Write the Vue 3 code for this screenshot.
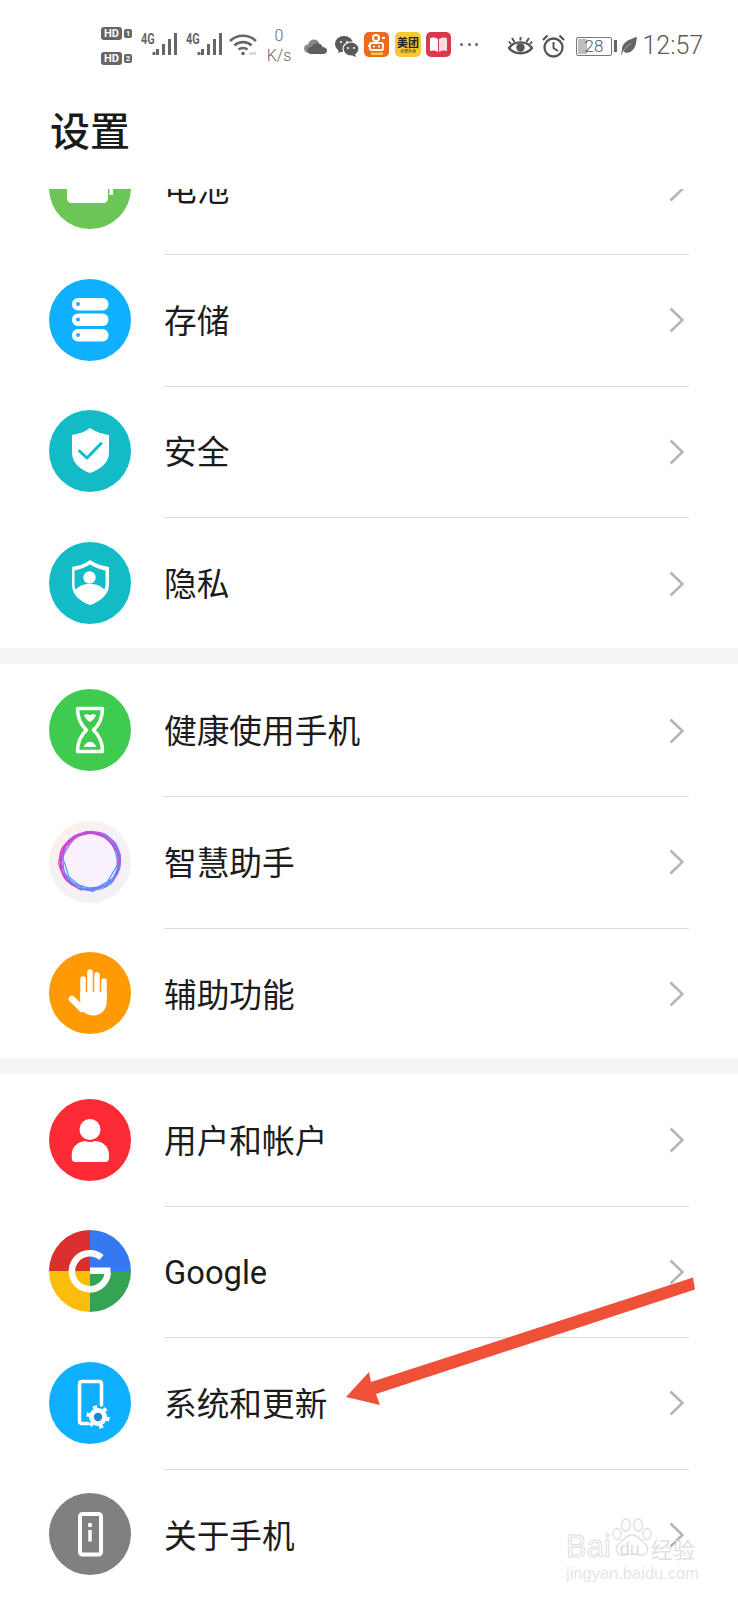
<script setup>
const sections = [
  [
    { icon: 'battery', label: '电池' },
    { icon: 'storage', label: '存储' },
    { icon: 'security', label: '安全' },
    { icon: 'privacy', label: '隐私' }
  ],
  [
    { icon: 'health', label: '健康使用手机' },
    { icon: 'assistant', label: '智慧助手' },
    { icon: 'access', label: '辅助功能' }
  ],
  [
    { icon: 'users', label: '用户和帐户' },
    { icon: 'google', label: 'Google' },
    { icon: 'system', label: '系统和更新' },
    { icon: 'about', label: '关于手机' }
  ]
]
const shield = 'M41 18C47 22 54 24 60 25V43C60 53 50 60 41 63C32 60 23 53 23 43V25C29 24 36 22 41 18Z'
const blob = 'M36 11C47 10 61 15 67 23C71 30 72 38 70 46C67 54 63 60 56 65C48 67 40 66 32 69C24 64 15 57 12 48C12 40 9 32 14 26C20 18 28 14 36 11Z'
const rings = [
  { a: 0, s: 1 },
  { a: 22, s: 0.98 },
  { a: -24, s: 1 },
  { a: 46, s: 0.96 },
  { a: -52, s: 0.97 },
  { a: 80, s: 0.95 }
]
const bars = [
  { x: 12, y: 16, h: 6 },
  { x: 18, y: 11, h: 11 },
  { x: 24, y: 6, h: 16 },
  { x: 30, y: 0, h: 22 }
]
</script>

<template>
  <div class="page">
    <div class="status">
      <div class="hd-col">
        <div class="hd-line"><span class="hd">HD</span><span class="sim">1</span></div>
        <div class="hd-line"><span class="hd">HD</span><span class="sim">2</span></div>
      </div>
      <div v-for="n in 2" :key="n" class="sig">
        <span class="g4">4G</span>
        <svg class="bars" width="26" height="23" viewBox="8 0 26 23">
          <circle cx="10" cy="20.5" r="1.7" fill="#666" />
          <rect v-for="b in bars" :key="b.x" :x="b.x" :y="b.y" width="3" :height="b.h" fill="#666" />
        </svg>
      </div>
      <svg class="wifi" width="28" height="23" viewBox="0 0 28 23" fill="none" stroke="#666" stroke-width="2.6">
        <path d="M1 8C8 1 20 1 27 8" />
        <path d="M5.5 12.5C10 8 18 8 22.5 12.5" />
        <path d="M9.5 16.5C12 14.5 16 14.5 18.5 16.5" />
        <circle cx="14" cy="20.5" r="1.8" fill="#666" stroke="none" />
        <path d="M20 20.5h7" stroke="#ccc" stroke-width="2" />
      </svg>
      <div class="speed"><span>0</span><span>K/s</span></div>
      <svg class="cloud" width="23" height="15" viewBox="0 0 23 15">
        <path d="M5 14C2 14 0 12 0 9.500C0 7 2 5.500 4 5.500C5 2 8 0 11 .5C14 1 15 3 15 5L11 14Z" fill="#888" />
        <path d="M7 15C4.500 15 3.500 13 3.500 11C3.500 9 5.500 7.500 7.500 8C9 5 12 3.500 15 4.500C17.500 5.500 18.500 7 18.500 8C21 8 23 9.500 23 11.500C23 13.500 21.500 15 19 15Z" fill="#5f5f5f" />
      </svg>
      <svg class="wechat" width="24" height="21" viewBox="0 0 24 21">
        <ellipse cx="9" cy="8" rx="9" ry="8" fill="#5a5a5a" />
        <path d="M4 13L3 17L8 15Z" fill="#5a5a5a" />
        <ellipse cx="16" cy="13" rx="8" ry="7" fill="#5a5a5a" stroke="#fff" stroke-width="1.200" />
        <path d="M20 18L21 21L17 19.500Z" fill="#5a5a5a" />
        <circle cx="6" cy="6" r="1.100" fill="#fff" />
        <circle cx="12" cy="6" r="1.100" fill="#fff" />
        <circle cx="13" cy="12" r="1" fill="#fff" />
        <circle cx="19" cy="12" r="1" fill="#fff" />
      </svg>
      <div class="app kuai">
        <svg width="25" height="25" viewBox="0 0 25 25" fill="none" stroke="#fff" stroke-width="2">
          <circle cx="12" cy="6" r="3" />
          <rect x="6" y="11" width="13" height="7" rx="1.500" />
          <circle cx="10" cy="14.500" r="1" fill="#fff" stroke="none" />
          <circle cx="15" cy="14.500" r="1" fill="#fff" stroke="none" />
          <path d="M18 6h3M4 14h2" />
          <rect x="7" y="20.500" width="12" height="2.500" fill="#f5c842" stroke="none" />
        </svg>
      </div>
      <div class="app mei"><span class="mei-t">美团</span><span class="mei-s">全部外卖</span></div>
      <div class="app book">
        <svg width="17" height="15" viewBox="0 0 17 15">
          <path d="M0 1C3 0 6 .5 8 2V15C6 13.500 3 13 0 14Z" fill="#fff" />
          <path d="M17 1C14 0 11 .5 9 2V15C11 13.500 14 13 17 14Z" fill="#fbdde0" />
        </svg>
      </div>
      <div class="dots"><i></i><i></i><i></i></div>
      <svg class="eye" width="25" height="19" viewBox="0 0 25 19" fill="none" stroke="#555" stroke-width="2.300">
        <path d="M1 11C6 3.500 19 3.500 24 11C19 18 6 18 1 11Z" />
        <circle cx="12.500" cy="10.500" r="4.200" fill="#555" stroke="none" />
        <path d="M4 1L6.500 5M12.500 0V3.500M21 1L18.500 5M1 4.500L3 7M24 4.500L22 7" stroke-width="2" />
      </svg>
      <svg class="alarm" width="23" height="24" viewBox="0 0 23 24" fill="none" stroke="#555" stroke-width="2.300">
        <circle cx="11.500" cy="13.500" r="9" />
        <path d="M11.500 8V14L16 17" stroke-width="2" />
        <path d="M1 6L5.500 1.500M22 6L17.500 1.500" />
      </svg>
      <div class="batt"><div class="batt-fill"></div><span class="batt-n">28</span></div>
      <div class="nub"></div>
      <svg class="leaf" width="16" height="18" viewBox="0 0 16 18">
        <path d="M16 0C15 6 15 13 8 15.500C5.500 16.300 3.500 15.500 2.500 14C5 10 8 8 11 6C8 7.500 4 10 1.500 15.500L.500 18L0 17C.500 15 1 14 1 12C1 6 8 2 16 0Z" fill="#666" />
      </svg>
      <span class="time">12:57</span>
    </div>

    <div class="head"><h1 class="title">设置</h1></div>

    <div class="list">
      <div class="list-inner">
        <section v-for="(sec, si) in sections" :key="si" class="sec">
          <div v-for="(row, ri) in sec" :key="row.icon" class="row">
            <svg class="ic" width="82" height="82" viewBox="0 0 82 82">
              <defs v-if="row.icon === 'assistant'">
                <linearGradient id="ringg" gradientUnits="userSpaceOnUse" x1="18" y1="14" x2="64" y2="68">
                  <stop offset="0" stop-color="#f02cc4" />
                  <stop offset="0.500" stop-color="#9c62ea" />
                  <stop offset="1" stop-color="#2eaeff" />
                </linearGradient>
                <linearGradient id="bgg" x1="0" y1="0" x2="1" y2="1">
                  <stop offset="0" stop-color="#f9f2ea" />
                  <stop offset="1" stop-color="#f2f0fc" />
                </linearGradient>
              </defs>
              <template v-if="row.icon === 'battery'">
                <circle cx="41" cy="41" r="41" fill="#6cc655" />
                <path d="M18 0H59V51Q59 56 54 56H23Q18 56 18 51Z" fill="#fff" />
                <path d="M60.500 30H64V48H60.500Z" fill="#fff" />
              </template>
              <template v-else-if="row.icon === 'storage'">
                <circle cx="41" cy="41" r="41" fill="#0fb0ff" />
                <rect x="23" y="19" width="36.500" height="12.500" rx="6" fill="#fff" />
                <rect x="23" y="34.500" width="36.500" height="12.500" rx="6" fill="#fff" />
                <rect x="23" y="50" width="36.500" height="12.500" rx="6" fill="#fff" />
                <circle cx="29" cy="25" r="2" fill="#3ba4dc" />
                <circle cx="29" cy="40.500" r="2" fill="#3ba4dc" />
                <circle cx="29" cy="56" r="2" fill="#3ba4dc" />
              </template>
              <template v-else-if="row.icon === 'security'">
                <circle cx="41" cy="41" r="41" fill="#12bcc6" />
                <path :d="shield" fill="#fff" />
                <path d="M30.500 41L38 48L52 33.500" fill="none" stroke="#12bcc6" stroke-width="3" stroke-linecap="round" stroke-linejoin="round" />
              </template>
              <template v-else-if="row.icon === 'privacy'">
                <circle cx="41" cy="41" r="41" fill="#12bcc6" />
                <path :d="shield" fill="#fff" />
                <path d="M41 22.500C46 25.500 51 27.500 56.500 28.500V43C56.500 44.500 56 46 55.300 47.500C51 43 46 42 41 42C36 42 31 43 26.700 47.500C26 46 25.500 44.500 25.500 43V28.500C31 27.500 36 25.500 41 22.500Z" fill="#12bcc6" />
                <circle cx="40.500" cy="35.500" r="6.200" fill="#fff" />
              </template>
              <template v-else-if="row.icon === 'health'">
                <circle cx="41" cy="41" r="41" fill="#3fcb4f" />
                <path d="M28.500 19.500H53.500C53.500 29 51 35 44.500 41C51 47 53.500 53 53.500 62.500H28.500C28.500 53 31 47 37.500 41C31 35 28.500 29 28.500 19.500Z" fill="none" stroke="#fff" stroke-width="3.500" stroke-linejoin="round" />
                <path d="M35 26C37 24.800 39.500 25 41 26.300C42.500 25 45 24.800 47 26C46 29.500 43.500 31.500 41 33C38.500 31.500 36 29.500 35 26Z" fill="#fff" />
                <path d="M34.500 58C36 54.500 39 52.800 41 52.800C43 52.800 46 54.500 47.500 58Z" fill="#fff" />
              </template>
              <template v-else-if="row.icon === 'assistant'">
                <circle cx="41" cy="41" r="41" fill="url(#bgg)" />
                <circle cx="41" cy="41" r="28" fill="#f9f1fc" />
                <g fill="none" stroke="url(#ringg)" stroke-width="1.300">
                  <path
                    v-for="r in rings"
                    :key="r.a"
                    :d="blob"
                    :transform="`translate(41 41) rotate(${r.a}) scale(${r.s}) translate(-41 -41)`"
                  />
                </g>
              </template>
              <template v-else-if="row.icon === 'access'">
                <circle cx="41" cy="41" r="41" fill="#ff9a05" />
                <g stroke="#fff" stroke-linecap="round" stroke-width="5.500" fill="none">
                  <path d="M34 45V27" />
                  <path d="M41 45V20" />
                  <path d="M48 45V23" />
                  <path d="M55 45V29" />
                  <path d="M23 47L33 57" stroke-width="6.500" />
                </g>
                <path d="M31.300 40H57.700V50C57.700 58 51.500 63.500 44.500 63.500C38.500 63.500 34.500 60.500 31.300 56Z" fill="#fff" />
              </template>
              <template v-else-if="row.icon === 'users'">
                <circle cx="41" cy="41" r="41" fill="#fb2b35" />
                <path d="M22.700 56C22.700 47 30 42 37 42H45.500C53 42 60 47 60 56V59Q60 63 56 63H26.700Q22.700 63 22.700 59Z" fill="#fff" />
                <circle cx="41" cy="30.500" r="12.500" fill="#fb2b35" />
                <circle cx="41" cy="30.500" r="10.500" fill="#fff" />
              </template>
              <template v-else-if="row.icon === 'google'">
                <path d="M41 41V0A41 41 0 0 0 0 41Z" fill="#d9302f" />
                <path d="M41 41V0A41 41 0 0 1 82 41Z" fill="#3578ef" />
                <path d="M41 41H82A41 41 0 0 1 41 82Z" fill="#34a454" />
                <path d="M41 41H0A41 41 0 0 0 41 82Z" fill="#fbbc0a" />
                <path d="M52.500 27.500A18 18 0 1 0 58.800 43" fill="none" stroke="#fff" stroke-width="6.500" />
                <rect x="41" y="37.500" width="20.500" height="6.500" fill="#fff" />
              </template>
              <template v-else-if="row.icon === 'system'">
                <circle cx="41" cy="41" r="41" fill="#0fb0ff" />
                <path d="M39 61.500H33Q30.500 61.500 30.500 59V22Q30.500 19.500 33 19.500H50Q52.500 19.500 52.500 22V43" fill="none" stroke="#fff" stroke-width="3.500" stroke-linecap="round" />
                <circle cx="49" cy="55" r="9" fill="#fff" />
                <circle cx="49" cy="55" r="10" fill="none" stroke="#fff" stroke-width="3.500" stroke-dasharray="4 6.470" />
                <circle cx="49" cy="55" r="4.200" fill="#1f86d0" />
              </template>
              <template v-else>
                <circle cx="41" cy="41" r="41" fill="#808080" />
                <rect x="31" y="21" width="21" height="40.500" rx="2.500" fill="none" stroke="#fff" stroke-width="4" />
                <circle cx="41" cy="32" r="2.200" fill="#fff" />
                <path d="M41 37V48.500" stroke="#fff" stroke-width="3.500" />
              </template>
            </svg>
            <div class="body" :class="{ last: ri === sec.length - 1 }">
              <span class="label">{{ row.label }}</span>
              <svg class="chev" width="15" height="26" viewBox="0 0 15 26" fill="none" stroke="#b4b4b4" stroke-width="2.600">
                <path d="M1.500 1.500L13.500 13L1.500 24.500" />
              </svg>
            </div>
          </div>
        </section>
      </div>
    </div>

    <svg class="arrow" width="360" height="135" viewBox="340 1270 360 135">
      <polygon points="693,1277.500 695,1289.500 376,1394 380,1405 346,1397 369,1372 371,1382" fill="#ef5138" />
    </svg>

    <div class="mark">
      <div class="mark-top">
        <span class="mark-bai">Bai</span>
        <span class="mark-paw">
          <svg width="44" height="42" viewBox="0 0 44 42" fill="none" stroke="#dedede" stroke-width="1.300">
            <ellipse cx="7" cy="16" rx="4" ry="5.500" />
            <ellipse cx="16" cy="7" rx="4.500" ry="6" />
            <ellipse cx="28" cy="7" rx="4.500" ry="6" />
            <ellipse cx="37" cy="16" rx="4" ry="5.500" />
            <path d="M22 17C28 17 31 22 36 27C40 32 36 38 30 37C26 36 18 36 14 37C8 38 4 32 8 27C13 22 16 17 22 17Z" fill="#fff" />
          </svg>
          <span class="mark-du">du</span>
        </span>
        <span class="mark-cn">经验</span>
      </div>
      <div class="mark-url">jingyan.baidu.com</div>
    </div>
  </div>
</template>

<style>
html, body { margin: 0; background: #fff; }
</style>

<style scoped>
.page {
  position: relative;
  width: 738px;
  height: 1600px;
  overflow: hidden;
  background: #fff;
  font-family: "Roboto", "Noto Sans CJK SC", sans-serif;
  color: #1a1a1a;
}
.status {
  height: 90px;
  display: flex;
  align-items: center;
  padding: 2px 0 0 101px;
  box-sizing: border-box;
}
.hd-col { display: flex; flex-direction: column; gap: 12px; width: 32px; }
.hd-line { display: flex; align-items: center; gap: 2px; }
.hd {
  width: 21px; height: 13px; background: #666; color: #fff; border-radius: 3px;
  font: 700 11px/13px "Roboto", sans-serif; text-align: center;
}
.sim {
  width: 8px; height: 9px; background: #666; color: #fff; border-radius: 2px;
  font: 700 8px/9px "Roboto", sans-serif; text-align: center;
}
.sig { position: relative; width: 37px; height: 23px; margin: 0 0 3px 8px; }
.g4 {
  position: absolute; left: 0; top: -1px;
  font: 700 14px/15px "Roboto", sans-serif; color: #666;
  transform: scaleX(.78); transform-origin: left center;
}
.bars { position: absolute; left: 11px; top: 0; }
.wifi { margin: 0 0 3px 6px; }
.speed {
  width: 26px; margin-left: 9px; display: flex; flex-direction: column; align-items: center;
  font: 300 16px/20px "Roboto", sans-serif; color: #666;
}
.cloud { margin-left: 12px; }
.wechat { margin-left: 8px; }
.app {
  width: 25px; height: 25px; border-radius: 5px; display: flex; align-items: center; justify-content: center;
  margin-bottom: 3px;
}
.kuai { margin-left: 5px; background: #ee6a1c; }
.mei {
  margin-left: 6px; width: 26px; background: #f7c934; flex-direction: column; color: #222;
}
.mei-t { font: 700 11px/13px "Noto Sans CJK SC", sans-serif; }
.mei-s { font: 400 4px/5px "Noto Sans CJK SC", sans-serif; }
.book { margin-left: 5px; background: #d8394f; }
.dots { margin: 0 0 3px 9px; width: 18px; display: flex; justify-content: space-between; }
.dots i { width: 3px; height: 3px; border-radius: 50%; background: #666; }
.eye { margin-left: 30px; }
.alarm { margin-left: 9px; }
.batt {
  position: relative; width: 36px; height: 19px; margin-left: 11px; box-sizing: border-box;
  border: 1px solid #777; border-radius: 2px; display: flex; align-items: center; justify-content: center;
}
.batt-fill { position: absolute; left: 1px; top: 1px; bottom: 1px; width: 9px; background: #bdbdbd; }
.batt-n { position: relative; font: 300 17px/17px "Roboto", sans-serif; color: #555; }
.nub { width: 2.500px; height: 12px; background: #666; margin-left: 2px; }
.leaf { margin-left: 4px; }
.time { margin: 0 0 0 6px; font: 300 25px/30px "Roboto", sans-serif; color: #5a5a5a; }
.head { height: 97px; box-sizing: content-box; padding: 2px 0 0 50px; }
.title { margin: 0; padding-top: 16px; font: 500 40px/42px "Noto Sans CJK SC", sans-serif; color: #1a1a1a; }
.list { height: 1411px; overflow: hidden; }
.list-inner { margin-top: -65.500px; }
.sec + .sec { border-top: 16px solid #f5f5f5; margin-top: -1.500px; padding-top: 1.500px; }
.sec + .sec + .sec { margin-top: -2px; padding-top: 1px; }
.row { height: 131.500px; display: flex; align-items: center; }
.ic { margin: 0 0 2px 49px; flex: none; }
.body {
  flex: 1; height: 100%; margin: 0 49px 0 33px; box-sizing: border-box;
  display: flex; align-items: center; justify-content: space-between;
  border-bottom: 1px solid #dcdcdc; padding-right: 5px;
}
.body.last { border-bottom: none; }
.label { margin-top: 3px; font: 400 32.700px/44px "Roboto", "Noto Sans CJK SC", sans-serif; color: #1c1c1c; }
.arrow { position: absolute; left: 340px; top: 1270px; }
.mark { position: absolute; left: 566px; top: 1518px; width: 134px; color: #e3e3e3; }
.mark-top { display: flex; align-items: flex-end; height: 44px; }
.mark-bai {
  font: 400 31px/30px "Liberation Sans", sans-serif; color: #fff;
  -webkit-text-stroke: 1px #dedede;
}
.mark-paw { position: relative; width: 44px; height: 44px; margin-left: -1px; flex: none; }
.mark-du {
  position: absolute; left: 10px; top: 22px;
  font: 400 18px/18px "Liberation Sans", sans-serif; color: #dcdcdc;
}
.mark-cn { font: 400 22px/28px "Noto Sans CJK SC", sans-serif; color: #dfdfdf; margin-left: -3px; white-space: nowrap; }
.mark-url { font: 400 16.500px/20px "Liberation Sans", sans-serif; color: #e6e6e6; white-space: nowrap; margin-top: 1px; }
</style>
